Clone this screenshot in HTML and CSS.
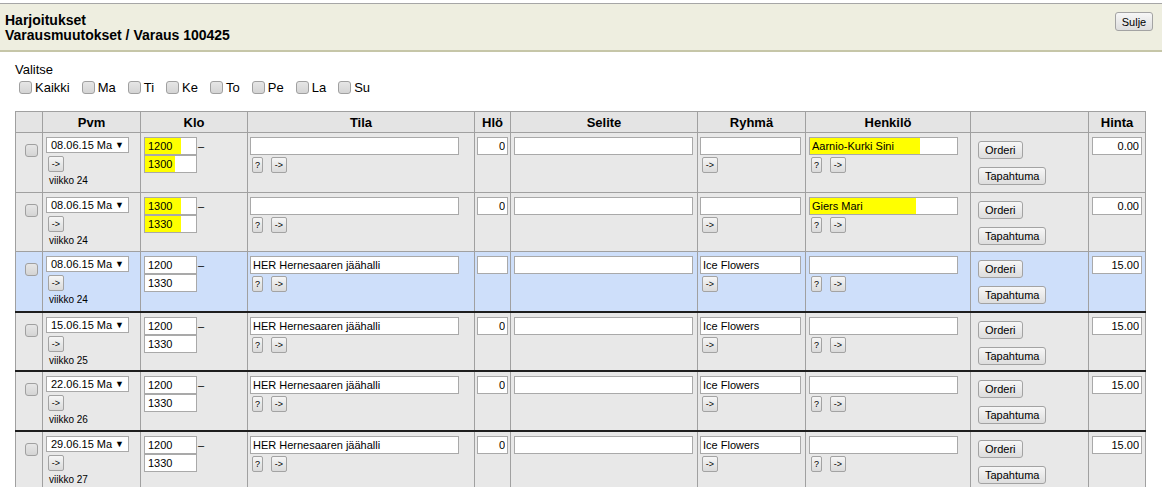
FILE: index.html
```html
<!DOCTYPE html>
<html lang="fi">
<head>
<meta charset="utf-8">
<title>Harjoitukset</title>
<link rel="stylesheet" href="styles.css">
</head>
<body>
<div class="topbar">
  <div class="titles">
    <div>Harjoitukset</div>
    <div>Varausmuutokset / Varaus 100425</div>
  </div>
  <button class="btn sulje">Sulje</button>
</div>

<div class="filter">
  <div class="lbl">Valitse</div>
  <div class="days">
    <label><input type="checkbox" class="cb">Kaikki</label>
    <label><input type="checkbox" class="cb">Ma</label>
    <label><input type="checkbox" class="cb">Ti</label>
    <label><input type="checkbox" class="cb">Ke</label>
    <label><input type="checkbox" class="cb">To</label>
    <label><input type="checkbox" class="cb">Pe</label>
    <label><input type="checkbox" class="cb">La</label>
    <label><input type="checkbox" class="cb">Su</label>
  </div>
</div>

<table class="grid">
  <colgroup>
    <col class="w-chk"><col class="w-pvm"><col class="w-klo"><col class="w-tila"><col class="w-hlo">
    <col class="w-sel"><col class="w-ryh"><col class="w-hen"><col class="w-act"><col class="w-hin">
  </colgroup>
  <thead>
    <tr><th></th><th>Pvm</th><th>Klo</th><th>Tila</th><th>Hlö</th><th>Selite</th><th>Ryhmä</th><th>Henkilö</th><th></th><th>Hinta</th></tr>
  </thead>
  <tbody>
    <tr>
      <td class="c-chk"><input type="checkbox" class="cb"></td>
      <td class="c-pvm"><div class="sel"><span>08.06.15 Ma</span><span class="arr">▼</span></div><button class="sb">-&gt;</button><div class="wk">viikko 24</div></td>
      <td class="c-klo"><div class="klo"><div class="times"><input class="inp t hl-a" value="1200"><input class="inp t hl-b" value="1300"></div><span class="dash">–</span></div></td>
      <td class="c-tila"><input class="inp tila" value=""><div class="btns"><button class="sb q">?</button><button class="sb">-&gt;</button></div></td>
      <td class="c-hlo"><input class="inp hlo" value="0"></td>
      <td class="c-sel"><input class="inp selite" value=""></td>
      <td class="c-ryh"><input class="inp ryh" value=""><div class="btns"><button class="sb">-&gt;</button></div></td>
      <td class="c-hen"><input class="inp hen hl-c" value="Aarnio-Kurki Sini"><div class="btns"><button class="sb q">?</button><button class="sb">-&gt;</button></div></td>
      <td class="c-act"><button class="btn act">Orderi</button><button class="btn act">Tapahtuma</button></td>
      <td class="c-hin"><input class="inp hin" value="0.00"></td>
    </tr>
    <tr>
      <td class="c-chk"><input type="checkbox" class="cb"></td>
      <td class="c-pvm"><div class="sel"><span>08.06.15 Ma</span><span class="arr">▼</span></div><button class="sb">-&gt;</button><div class="wk">viikko 24</div></td>
      <td class="c-klo"><div class="klo"><div class="times"><input class="inp t hl-a" value="1300"><input class="inp t hl-a" value="1330"></div><span class="dash">–</span></div></td>
      <td class="c-tila"><input class="inp tila" value=""><div class="btns"><button class="sb q">?</button><button class="sb">-&gt;</button></div></td>
      <td class="c-hlo"><input class="inp hlo" value="0"></td>
      <td class="c-sel"><input class="inp selite" value=""></td>
      <td class="c-ryh"><input class="inp ryh" value=""><div class="btns"><button class="sb">-&gt;</button></div></td>
      <td class="c-hen"><input class="inp hen hl-d" value="Giers Mari"><div class="btns"><button class="sb q">?</button><button class="sb">-&gt;</button></div></td>
      <td class="c-act"><button class="btn act">Orderi</button><button class="btn act">Tapahtuma</button></td>
      <td class="c-hin"><input class="inp hin" value="0.00"></td>
    </tr>
    <tr class="cur">
      <td class="c-chk"><input type="checkbox" class="cb"></td>
      <td class="c-pvm"><div class="sel"><span>08.06.15 Ma</span><span class="arr">▼</span></div><button class="sb">-&gt;</button><div class="wk">viikko 24</div></td>
      <td class="c-klo"><div class="klo"><div class="times"><input class="inp t" value="1200"><input class="inp t" value="1330"></div><span class="dash">–</span></div></td>
      <td class="c-tila"><input class="inp tila" value="HER Hernesaaren jäähalli"><div class="btns"><button class="sb q">?</button><button class="sb">-&gt;</button></div></td>
      <td class="c-hlo"><input class="inp hlo" value=""></td>
      <td class="c-sel"><input class="inp selite" value=""></td>
      <td class="c-ryh"><input class="inp ryh" value="Ice Flowers"><div class="btns"><button class="sb">-&gt;</button></div></td>
      <td class="c-hen"><input class="inp hen" value=""><div class="btns"><button class="sb q">?</button><button class="sb">-&gt;</button></div></td>
      <td class="c-act"><button class="btn act">Orderi</button><button class="btn act">Tapahtuma</button></td>
      <td class="c-hin"><input class="inp hin" value="15.00"></td>
    </tr>
    <tr class="sep">
      <td class="c-chk"><input type="checkbox" class="cb"></td>
      <td class="c-pvm"><div class="sel"><span>15.06.15 Ma</span><span class="arr">▼</span></div><button class="sb">-&gt;</button><div class="wk">viikko 25</div></td>
      <td class="c-klo"><div class="klo"><div class="times"><input class="inp t" value="1200"><input class="inp t" value="1330"></div><span class="dash">–</span></div></td>
      <td class="c-tila"><input class="inp tila" value="HER Hernesaaren jäähalli"><div class="btns"><button class="sb q">?</button><button class="sb">-&gt;</button></div></td>
      <td class="c-hlo"><input class="inp hlo" value="0"></td>
      <td class="c-sel"><input class="inp selite" value=""></td>
      <td class="c-ryh"><input class="inp ryh" value="Ice Flowers"><div class="btns"><button class="sb">-&gt;</button></div></td>
      <td class="c-hen"><input class="inp hen" value=""><div class="btns"><button class="sb q">?</button><button class="sb">-&gt;</button></div></td>
      <td class="c-act"><button class="btn act">Orderi</button><button class="btn act">Tapahtuma</button></td>
      <td class="c-hin"><input class="inp hin" value="15.00"></td>
    </tr>
    <tr class="sep">
      <td class="c-chk"><input type="checkbox" class="cb"></td>
      <td class="c-pvm"><div class="sel"><span>22.06.15 Ma</span><span class="arr">▼</span></div><button class="sb">-&gt;</button><div class="wk">viikko 26</div></td>
      <td class="c-klo"><div class="klo"><div class="times"><input class="inp t" value="1200"><input class="inp t" value="1330"></div><span class="dash">–</span></div></td>
      <td class="c-tila"><input class="inp tila" value="HER Hernesaaren jäähalli"><div class="btns"><button class="sb q">?</button><button class="sb">-&gt;</button></div></td>
      <td class="c-hlo"><input class="inp hlo" value="0"></td>
      <td class="c-sel"><input class="inp selite" value=""></td>
      <td class="c-ryh"><input class="inp ryh" value="Ice Flowers"><div class="btns"><button class="sb">-&gt;</button></div></td>
      <td class="c-hen"><input class="inp hen" value=""><div class="btns"><button class="sb q">?</button><button class="sb">-&gt;</button></div></td>
      <td class="c-act"><button class="btn act">Orderi</button><button class="btn act">Tapahtuma</button></td>
      <td class="c-hin"><input class="inp hin" value="15.00"></td>
    </tr>
    <tr class="sep">
      <td class="c-chk"><input type="checkbox" class="cb"></td>
      <td class="c-pvm"><div class="sel"><span>29.06.15 Ma</span><span class="arr">▼</span></div><button class="sb">-&gt;</button><div class="wk">viikko 27</div></td>
      <td class="c-klo"><div class="klo"><div class="times"><input class="inp t" value="1200"><input class="inp t" value="1330"></div><span class="dash">–</span></div></td>
      <td class="c-tila"><input class="inp tila" value="HER Hernesaaren jäähalli"><div class="btns"><button class="sb q">?</button><button class="sb">-&gt;</button></div></td>
      <td class="c-hlo"><input class="inp hlo" value="0"></td>
      <td class="c-sel"><input class="inp selite" value=""></td>
      <td class="c-ryh"><input class="inp ryh" value="Ice Flowers"><div class="btns"><button class="sb">-&gt;</button></div></td>
      <td class="c-hen"><input class="inp hen" value=""><div class="btns"><button class="sb q">?</button><button class="sb">-&gt;</button></div></td>
      <td class="c-act"><button class="btn act">Orderi</button><button class="btn act">Tapahtuma</button></td>
      <td class="c-hin"><input class="inp hin" value="15.00"></td>
    </tr>
  </tbody>
</table>
</body>
</html>
```

FILE: styles.css
```css
html, body {
  margin: 0;
  padding: 0;
  background: #fff;
  color: #000;
  font-family: "Liberation Sans", Arial, sans-serif;
}

.topbar {
  margin-top: 3px;
  border-top: 1px solid #a6a6a6;
  border-bottom: 2px solid #c6c6a8;
  background: #eeeee0;
  padding: 9px 9px 7px 5px;
  display: flex;
  justify-content: space-between;
  align-items: flex-start;
}

.titles {
  font-size: 14px;
  font-weight: bold;
  line-height: 15px;
}

.btn {
  font-family: "Liberation Sans", Arial, sans-serif;
  font-size: 11px;
  color: #000;
  border: 1px solid #a3a3a3;
  border-radius: 3px;
  background: linear-gradient(#f7f7f7, #dddddd);
  padding: 0;
  margin: 0;
  box-sizing: border-box;
}

.sulje {
  width: 38px;
  height: 19px;
  margin-top: -1px;
}

.filter {
  padding: 10px 0 0 15px;
}

.lbl {
  font-size: 13px;
  line-height: 15px;
}

.days {
  display: flex;
  align-items: center;
  margin-top: 1px;
  font-size: 13px;
  line-height: 15px;
}

.days label {
  display: flex;
  align-items: center;
  margin-right: 8px;
}

.cb {
  appearance: none;
  -webkit-appearance: none;
  width: 13px;
  height: 13px;
  margin: 3px 3px 3px 4px;
  box-sizing: border-box;
  border: 1px solid #a0a0a0;
  border-radius: 3px;
  background: linear-gradient(#e6e6e6, #d4d4d4);
}

.grid {
  margin: 14px 0 0 15px;
  border-collapse: collapse;
  table-layout: fixed;
  width: 1131px;
  font-family: "Liberation Sans", Arial, sans-serif;
}

.w-chk { width: 27px; }
.w-pvm { width: 98px; }
.w-klo { width: 107px; }
.w-tila { width: 227px; }
.w-hlo { width: 36px; }
.w-sel { width: 187px; }
.w-ryh { width: 108px; }
.w-hen { width: 165px; }
.w-act { width: 118px; }
.w-hin { width: 57px; }

.grid th {
  height: 20px;
  padding: 0;
  background: #e4e4e4;
  border: 1px solid #a0a0a0;
  font-size: 13px;
  font-weight: bold;
  text-align: center;
  vertical-align: middle;
}

.grid td {
  height: 59.7px;
  box-sizing: border-box;
  padding: 4px 0 0 3px;
  background: #e8e8e8;
  border: 1px solid #a0a0a0;
  vertical-align: top;
}

.grid tr.cur td {
  background: #cedffa;
}

.grid tr.sep td {
  border-top: 2px solid #1e1e1e;
}

.grid td.c-chk {
  padding: 8px 0 0 5px;
}

.grid td.c-pvm,
.grid td.c-klo,
.grid td.c-sel,
.grid td.c-hen,
.grid td.c-hin {
  padding-left: 3px;
}

.grid td.c-tila,
.grid td.c-hlo,
.grid td.c-ryh {
  padding-left: 2px;
}

.grid td.c-act {
  padding: 8px 0 0 7px;
}

.sel {
  box-sizing: border-box;
  width: 83px;
  height: 16px;
  border: 1px solid #a9a9a9;
  background: #fff;
  display: flex;
  align-items: center;
  justify-content: space-between;
  padding: 0 4px 0 4px;
  font-size: 11px;
}

.sel .arr {
  font-size: 9px;
}

.sb {
  display: block;
  box-sizing: border-box;
  height: 16px;
  min-width: 16px;
  padding: 0 2px;
  margin: 3px 0 0 2px;
  border: 1px solid #a3a3a3;
  border-radius: 2px;
  background: linear-gradient(#f6f6f6, #dadada);
  font-family: "Liberation Sans", Arial, sans-serif;
  font-size: 9px;
  color: #000;
  line-height: 12px;
}

.sb.q {
  min-width: 11px;
  width: 11px;
  padding: 0;
}

.wk {
  font-size: 10px;
  line-height: 12px;
  margin: 3px 0 0 3px;
}

.btns {
  display: flex;
  gap: 6px;
}

.btns .sb {
  margin-top: 2px;
}

.inp {
  display: block;
  box-sizing: border-box;
  height: 18px;
  margin: 0;
  padding: 0 2px;
  border: 1px solid #a9a9a9;
  background: #fff;
  font-family: "Liberation Sans", Arial, sans-serif;
  font-size: 11px;
  color: #000;
  outline: none;
}

.klo {
  display: flex;
  align-items: flex-start;
}

.dash {
  font-size: 11px;
  line-height: 18px;
  margin-left: 1px;
}

.inp.t { width: 53px; padding-left: 3px; }
.inp.tila { width: 209px; }
.inp.hlo { width: 31px; text-align: right; }
.inp.selite { width: 179px; }
.inp.ryh { width: 101px; }
.inp.hen { width: 149px; }
.inp.hin { width: 50px; text-align: right; }

.hl-a { background: linear-gradient(90deg, #ffff00 0 36px, #fff 36px); }
.hl-b { background: linear-gradient(90deg, #ffff00 0 30px, #fff 30px); }
.hl-c { background: linear-gradient(90deg, #ffff00 0 110px, #fff 110px); }
.hl-d { background: linear-gradient(90deg, #ffff00 0 106px, #fff 106px); }

.act {
  display: block;
  height: 18px;
  padding: 0 6px;
}

.act + .act {
  margin-top: 8px;
}
```
